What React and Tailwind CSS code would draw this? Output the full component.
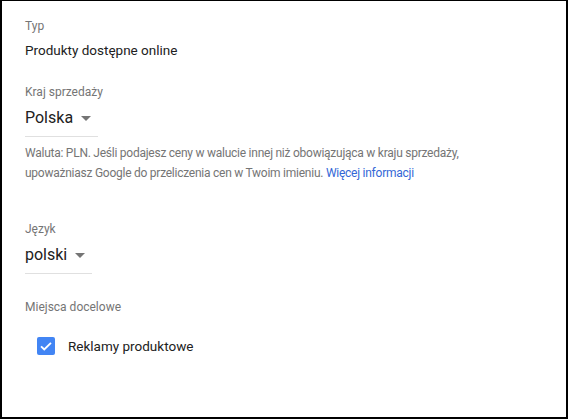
const ArrowDrop = () => (
  <svg width="24" height="24" viewBox="0 0 24 24" className="shrink-0">
    <path d="M7 10l5 5 5-5z" fill="#757575" />
  </svg>
);

const Dropdown = ({ value }) => (
  <div className="mt-[6px] inline-flex items-center border-b border-[#e0e0e0] pb-[6px]">
    <span className="text-[16px] leading-6 text-[#212121]">{value}</span>
    <span className="ml-[1px]"><ArrowDrop /></span>
  </div>
);

const Label = ({ children, className = '' }) => (
  <div className={`text-[12px] leading-4 text-[#757575] ${className}`}>{children}</div>
);

export default function App() {
  return (
    <div
      className="w-[568px] h-[419px] bg-white border-l-2 border-r-2 border-b-2 border-t border-black pl-[23px] pt-[17px]"
      style={{ fontFamily: 'Roboto, "Noto Sans", sans-serif' }}
    >
      <Label>Typ</Label>
      <div className="mt-[6px] text-[13.5px] leading-5 text-[#212121]">Produkty dostępne online</div>

      <Label className="mt-6">Kraj sprzedaży</Label>
      <Dropdown value="Polska" />

      <div className="mt-[6px] text-[12px] leading-5 tracking-[-0.25px] text-[#757575]">
        Waluta: PLN. Jeśli podajesz ceny w walucie innej niż obowiązująca w kraju sprzedaży,
        <br />
        upoważniasz Google do przeliczenia cen w Twoim imieniu.{' '}
        <a className="text-[#3367d6]">Więcej informacji</a>
      </div>

      <Label className="mt-[38px]">Język</Label>
      <Dropdown value="polski" />

      <Label className="mt-[25px]">Miejsca docelowe</Label>
      <div className="mt-[22px] flex h-[18px] items-center pl-[12px]">
        <div className="flex h-[18px] w-[18px] items-center justify-center rounded-[2px] bg-[#4285f4]">
          <svg width="14" height="14" viewBox="0 0 24 24">
            <path d="M3.5 12.5l5.5 5.5L20.5 6.5" fill="none" stroke="white" strokeWidth="3.2" />
          </svg>
        </div>
        <span className="ml-[13px] text-[13.5px] leading-5 text-[#212121]">Reklamy produktowe</span>
      </div>
    </div>
  );
}
